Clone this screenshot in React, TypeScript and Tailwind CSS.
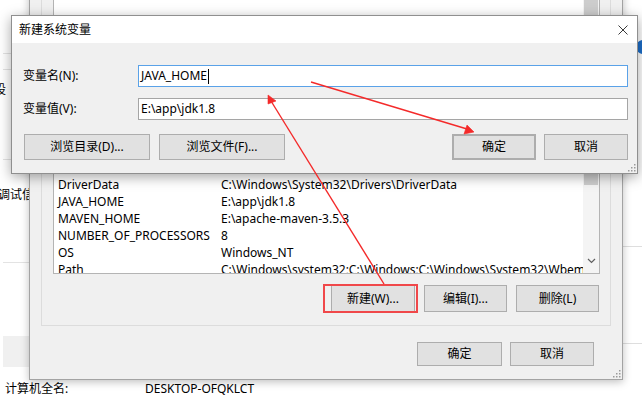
import React from 'react';

const rows: [string, string][] = [
  ['DriverData', 'C:\\Windows\\System32\\Drivers\\DriverData'],
  ['JAVA_HOME', 'E:\\app\\jdk1.8'],
  ['MAVEN_HOME', 'E:\\apache-maven-3.5.3'],
  ['NUMBER_OF_PROCESSORS', '8'],
  ['OS', 'Windows_NT'],
  ['Path', 'C:\\Windows\\system32;C:\\Windows;C:\\Windows\\System32\\Wbem;C:\\Windows\\System32\\WindowsPowerShell'],
];

function WinButton({ label, className = '' }: { label: string; className?: string }) {
  return (
    <div
      className={`flex shrink-0 items-center justify-center border border-[#adadad] bg-[#e1e1e1] text-[12px] text-black ${className}`}
    >
      {label}
    </div>
  );
}

function Grip() {
  const dots = [
    [7, 1],
    [7, 4],
    [4, 4],
    [7, 7],
    [4, 7],
    [1, 7],
  ];
  return (
    <svg width="9" height="9" viewBox="0 0 9 9" className="absolute bottom-[1px] right-[1px]">
      {dots.map(([x, y]) => (
        <rect key={`${x}-${y}`} x={x} y={y} width="1.5" height="1.5" fill="#9a9a9a" />
      ))}
    </svg>
  );
}

function EnvDialog() {
  return (
    <div className="absolute left-[29px] top-[-12px] flex h-[392px] w-[594px] flex-col border border-[#a3a3a3] bg-[#f0f0f0] px-[11px] shadow-[0_2px_8px_rgba(0,0,0,0.25)]">
      <div className="flex flex-1 flex-col border border-[#dcdcdc] pb-[13px] pl-[11px] pr-[10px]">
        <div className="flex flex-1 overflow-hidden border border-[#b4b4b4] bg-white">
          <div className="flex flex-1 flex-col justify-end overflow-hidden">
            <div className="-mb-[5px] flex flex-col">
              {rows.map(([name, value]) => (
                <div key={name} className="flex h-[17px] items-center whitespace-nowrap text-[12px] text-black">
                  <span className="w-[167px] shrink-0 pl-[4px]">{name}</span>
                  <span>{value}</span>
                </div>
              ))}
            </div>
          </div>
          <div className="flex w-[16px] shrink-0 flex-col bg-[#f4f4f4]">
            <div className="mx-[1px] h-[194px] bg-[#cdcdcd]" />
            <div className="flex-1" />
            <div className="flex h-[17px] items-start justify-center pt-[2px]">
              <svg width="9" height="6" viewBox="0 0 9 6">
                <path d="M1 1 L4.5 4.5 L8 1" fill="none" stroke="#606060" strokeWidth="1.2" />
              </svg>
            </div>
          </div>
        </div>
        <div className="mt-[11px] flex h-[27px] justify-end gap-[9px] pr-[1px]">
          <WinButton label="新建(W)..." className="w-[84px]" />
          <WinButton label="编辑(I)..." className="w-[83px]" />
          <WinButton label="删除(L)" className="w-[83px]" />
        </div>
      </div>
      <div className="mb-[13px] mt-[16px] flex h-[24px] justify-end gap-[8px] pr-[17px]">
        <WinButton label="确定" className="w-[85px]" />
        <WinButton label="取消" className="w-[84px]" />
      </div>
      <Grip />
    </div>
  );
}

function NewVarDialog() {
  return (
    <div className="absolute left-[11px] top-[15px] flex h-[159px] w-[627px] flex-col border border-[#8f8f8f] bg-[#f0f0f0] shadow-[0_3px_12px_rgba(0,0,0,0.35)]">
      <div className="flex h-[27px] shrink-0 items-center justify-between bg-white pl-[7px] pr-[9px] text-[12px] text-black">
        <span>新建系统变量</span>
        <svg width="10" height="10" viewBox="0 0 10 10">
          <path d="M0.5 0.5 L9.5 9.5 M9.5 0.5 L0.5 9.5" stroke="#3a3a3a" strokeWidth="1" />
        </svg>
      </div>
      <div className="flex flex-1 flex-col pl-[11px] pr-[9px] pt-[22px] text-[12px] text-black">
        <div className="flex h-[22px] items-center">
          <span className="w-[115px] shrink-0">变量名(N):</span>
          <div className="flex h-full flex-1 items-center border border-[#5aa2e8] bg-white pl-[2px]">
            <span>JAVA_HOME</span>
            <span className="ml-[1px] h-[15px] w-px bg-black" />
          </div>
        </div>
        <div className="mt-[11px] flex h-[22px] items-center">
          <span className="w-[115px] shrink-0">变量值(V):</span>
          <div className="flex h-full flex-1 items-center border border-[#a5a5a5] bg-white pl-[2px]">
            <span>E:\app\jdk1.8</span>
          </div>
        </div>
        <div className="mt-[14px] flex h-[26px] items-stretch pl-[1px]">
          <WinButton label="浏览目录(D)..." className="w-[126px]" />
          <WinButton label="浏览文件(F)..." className="ml-[9px] w-[126px]" />
          <div className="flex-1" />
          <WinButton label="确定" className="w-[84px] border-2 border-[#4a97e4]" />
          <WinButton label="取消" className="ml-[8px] w-[84px]" />
        </div>
      </div>
      <Grip />
    </div>
  );
}

function Arrows() {
  return (
    <svg className="pointer-events-none absolute left-0 top-0" width="642" height="407" viewBox="0 0 642 407">
      <g stroke="#f42a2a" strokeWidth="1.4" fill="#f42a2a">
        <line x1="384" y1="284" x2="271" y2="101" />
        <path d="M268 95 L276 101 L268 104 Z" strokeWidth="0.6" />
        <line x1="311" y1="82" x2="467" y2="129" />
        <path d="M474 132 L464 134 L467 125 Z" strokeWidth="0.6" />
      </g>
    </svg>
  );
}

export default function App() {
  return (
    <div className="relative h-[407px] w-[642px] overflow-hidden bg-white font-['Noto_Sans','Noto_Sans_CJK_SC',sans-serif]">
      {/* background window */}
      <div className="flex h-[380px]">
        <div className="flex w-[29px] shrink-0 flex-col text-[12px] text-black">
          <div className="ml-[3px] h-[54px] border-b border-[#e3e3e3]" />
          <div className="ml-[3px] h-[16px] border-b border-[#e3e3e3]" />
          <div className="ml-[3px] h-[90px] border-b border-[#e3e3e3] pt-[11px]">
            <span className="-ml-[9px] block leading-[18px]">设</span>
          </div>
          <div className="ml-[3px] h-[103px] whitespace-nowrap border-b border-[#e3e3e3] pt-[26px]">
            <span className="-ml-[5px] block leading-[18px]">调试信息</span>
          </div>
          <div className="h-[73px]" />
          <div className="ml-[3px] h-[31px] bg-[#f0f0f0]" />
          <div className="flex-1" />
        </div>
        <div className="flex-1" />
        <div className="flex w-[19px] shrink-0 flex-col">
          <div className="h-[247px] border-b border-[#dedede]" />
          <div className="h-[97px] border-b border-[#dedede]" />
        </div>
      </div>
      <div className="flex h-[27px] items-start text-[12px] text-black">
        <span className="w-[145px] pl-[5px]">计算机全名:</span>
        <span>DESKTOP-OFQKLCT</span>
      </div>

      <div className="absolute left-[636px] top-[40px] h-[14px] w-[14px] rounded-full bg-[#1c6ec9]" />
      <EnvDialog />
      <NewVarDialog />
      <div className="pointer-events-none absolute left-[323px] top-[284px] h-[29px] w-[95px] border-2 border-[#f0484a]" />
      <Arrows />
    </div>
  );
}
